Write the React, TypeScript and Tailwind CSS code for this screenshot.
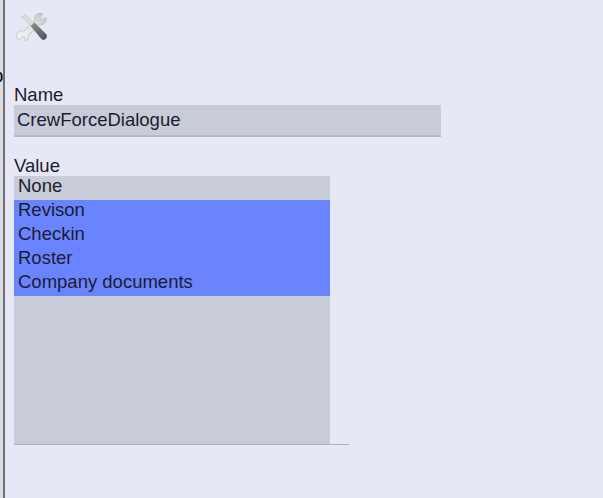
import React, { FC } from "react";

const options = [
  { label: "None", selected: false },
  { label: "Revison", selected: true },
  { label: "Checkin", selected: true },
  { label: "Roster", selected: true },
  { label: "Company documents", selected: true },
];

const ToolsIcon: FC = () => (
  <svg width="36" height="32" viewBox="0 0 36 32" fill="none" className="blur-[0.6px]">
    <defs>
      <linearGradient id="steel" x1="0" y1="1" x2="1" y2="0">
        <stop offset="0" stopColor="#f6f6f6" />
        <stop offset="0.6" stopColor="#e2e2e2" />
        <stop offset="1" stopColor="#bcbcbc" />
      </linearGradient>
      <linearGradient id="grip" x1="0" y1="0" x2="1" y2="1">
        <stop offset="0" stopColor="#8f9295" />
        <stop offset="1" stopColor="#4c4f52" />
      </linearGradient>
    </defs>
    {/* wrench */}
    <path
      d="M4 29 C1 27 1 23 3 21 C5 19.5 7 19.5 9 20 L20 9 C19.5 6.5 20 4.5 22 3 C24 2 26 2 27.5 3 L25 6.5 L27.5 9 L31 6.5 C31.5 9 31 11 29 12.5 C27.5 14 25.5 14 24 13.5 L13 25 C13.5 27 12.5 29 10.5 30 L9.5 26 L6.5 26 Z"
      fill="url(#steel)"
      stroke="#b4b4b4"
      strokeWidth="0.7"
    />
    {/* screwdriver shaft */}
    <path d="M7 6 L10 3.5 L20 13.5 L17 16 Z" fill="#dcdcdc" stroke="#b8b8b8" strokeWidth="0.6" />
    {/* screwdriver grip */}
    <path d="M15.5 15 L19.5 11.5 L31.5 23.5 C32.5 25.5 31.5 28 29 29 C27.5 29 26.5 28 25.5 27 Z" fill="url(#grip)" />
  </svg>
);

const App: FC = () => {
  return (
    <div
      className="flex h-[498px] w-[603px] overflow-hidden bg-[#e6e8f5] text-[18.5px] leading-[24px] text-[#1c1c30]"
      style={{ fontFamily: '"Liberation Sans", Arial, sans-serif' }}
    >
      {/* Clipped edge of the window behind */}
      <div className="h-full w-[3px] shrink-0 overflow-hidden bg-[#dcdde4] pt-[64px]">
        <span className="-ml-[7px] block text-black">p</span>
      </div>
      <div className="h-full w-[2px] shrink-0 bg-[#6f6f74]" />

      <div className="flex-1 pl-[9px]">
        <div className="pl-[1px] pt-[11px]">
          <ToolsIcon />
        </div>

        <label className="mt-[40px] block h-[24px]">Name</label>
        <div className="mt-[-2px] h-[32px] w-[427px] border-b-2 border-[#b6b8c6] bg-[#c8cbd8] pl-[3px] leading-[29px]">
          CrewForceDialogue
        </div>

        <label className="mt-[17px] block h-[24px]">Value</label>
        <div className="mt-[-2px] h-[269px] w-[335px] border-b border-[#b0b2c0]">
          <ul className="h-full w-[316px] bg-[#c8cbd8] leading-[20px]">
            {options.map((option) => (
              <li
                key={option.label}
                className={
                  option.selected
                    ? "h-[24px] bg-[#6a84ff] pl-[4px]"
                    : "h-[24px] pl-[4px]"
                }
              >
                {option.label}
              </li>
            ))}
          </ul>
        </div>
      </div>
    </div>
  );
};

export default App;
